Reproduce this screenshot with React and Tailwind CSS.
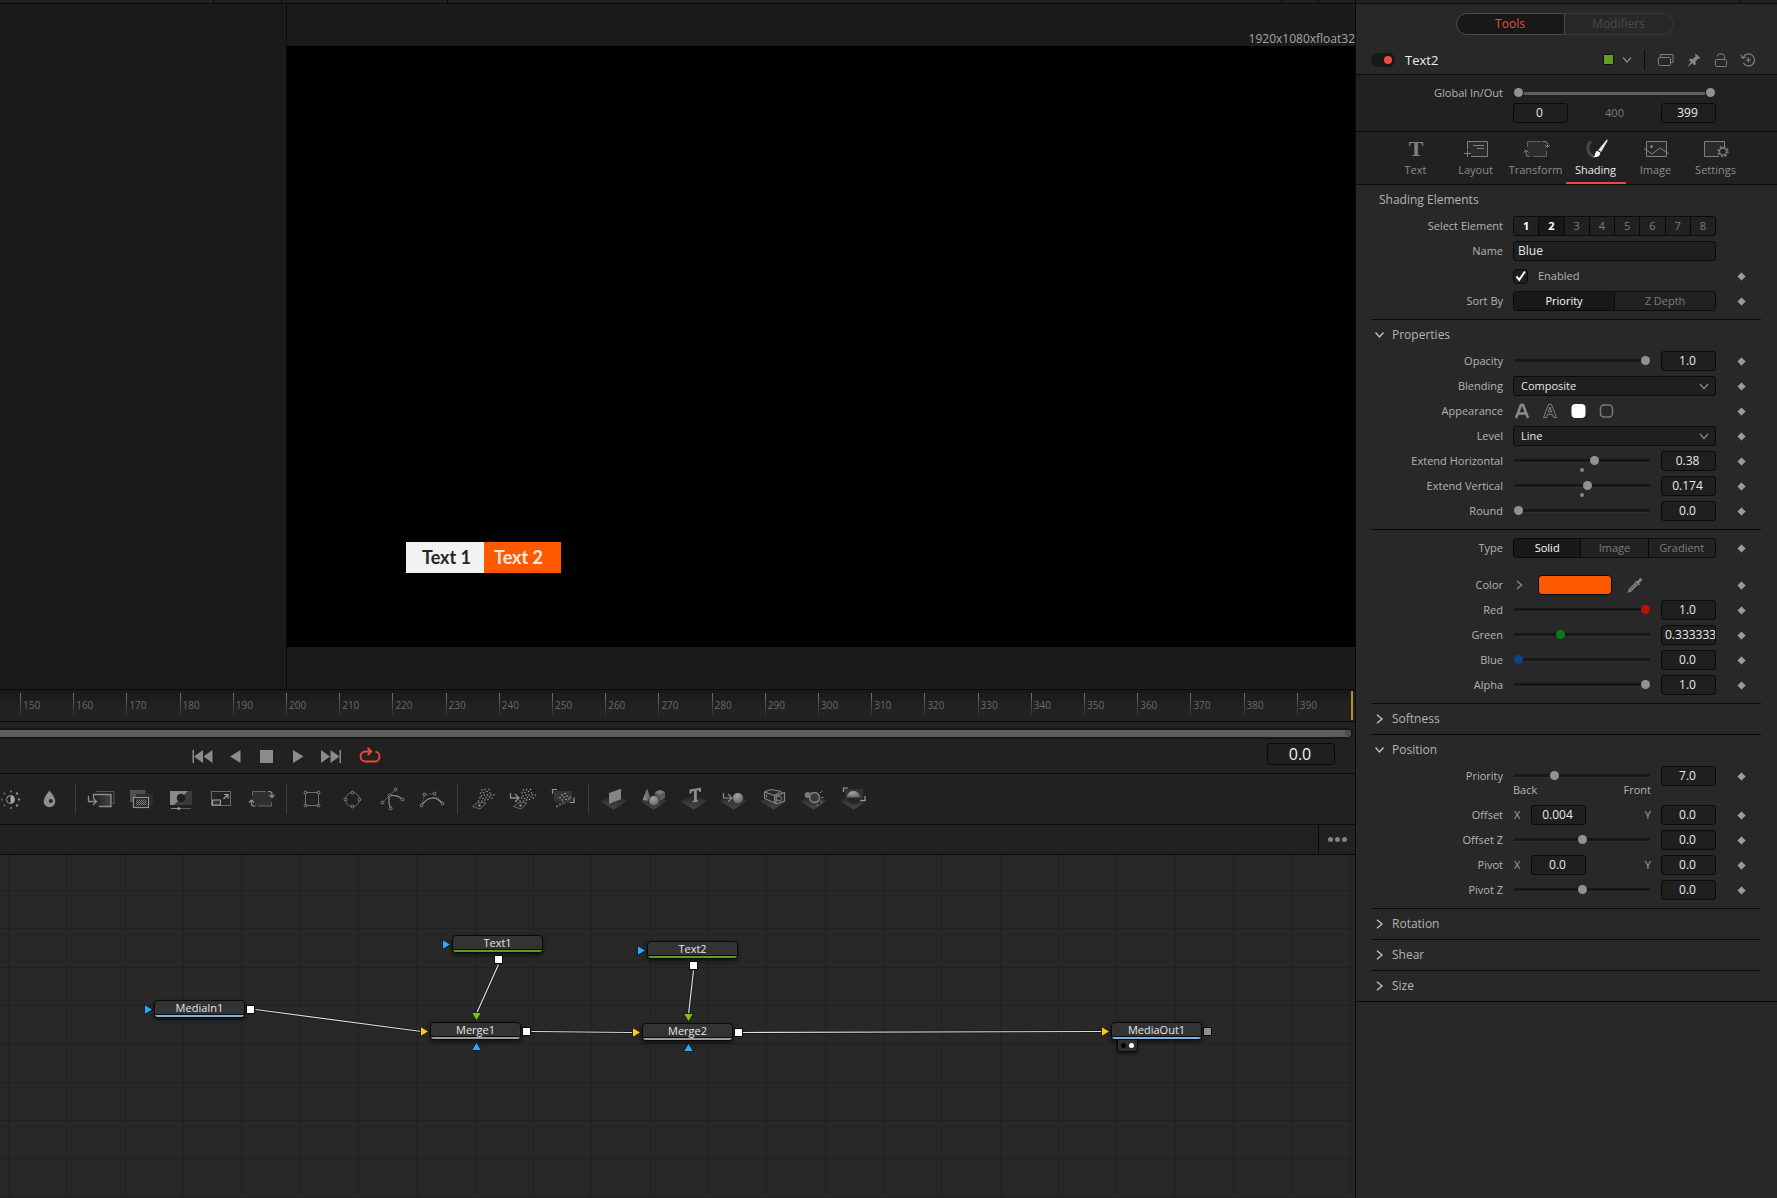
import React from "react";

/* ---------- shared pieces ---------- */

const thumb =
  "[&::-webkit-slider-thumb]:appearance-none [&::-webkit-slider-thumb]:w-[9px] [&::-webkit-slider-thumb]:h-[9px] [&::-webkit-slider-thumb]:rounded-full";
const thumbColors = {
  gray: "[&::-webkit-slider-thumb]:bg-[#919191]",
  red: "[&::-webkit-slider-thumb]:bg-[#b8120a]",
  green: "[&::-webkit-slider-thumb]:bg-[#0b7a1e]",
  blue: "[&::-webkit-slider-thumb]:bg-[#0d428c]",
};
const track =
  "[&::-webkit-slider-runnable-track]:h-[3px] [&::-webkit-slider-runnable-track]:rounded-full [&::-webkit-slider-runnable-track]:bg-[#171717] [&::-webkit-slider-runnable-track]:shadow-[0_1px_0_#303030] [&::-webkit-slider-thumb]:-mt-[3px]";

function Slider({ label, value, color = "gray", marker }) {
  return (
    <div className="relative flex h-5 w-[136px] items-center pb-px">
      <input
        type="range"
        aria-label={label}
        min="0"
        max="1"
        step="any"
        defaultValue={value}
        className={`h-[9px] w-full appearance-none bg-transparent ${thumb} ${thumbColors[color]} ${track}`}
      />
      {marker && (
        <span className="absolute left-1/2 top-[17px] h-1 w-1 -translate-x-1/2 rounded-full bg-[#858585]" />
      )}
    </div>
  );
}

function NumberBox({ label, value, start }) {
  return (
    <input
      type="text"
      aria-label={label}
      defaultValue={value}
      className={`h-5 w-[55px] shrink-0 rounded-[3px] border border-[#0a0a0a] bg-[#1f1f1f] pb-[2px] text-[12px] leading-4 text-[#e8e8e8] ${
        start ? "pl-[3px] text-left" : "pr-[2px] text-center"
      }`}
    />
  );
}

function Keyframe({ label }) {
  return (
    <button aria-label={`Keyframe ${label}`} className="ml-5 flex h-5 w-[11px] items-center justify-center">
      <svg width="11" height="11" viewBox="0 0 11 11">
        <path d="M5.5 .8 10.200 5.5 5.5 10.200 .8 5.5Z" fill="#9a9a9a" stroke="#161616" strokeWidth="1" />
      </svg>
    </button>
  );
}

function Row({ label, children, keyframe = true }) {
  return (
    <div className="flex h-5 items-center">
      <span className="mr-[10px] w-[132px] shrink-0 text-right text-[11px] leading-5 text-[#b4b4b4]">{label}</span>
      <div className="flex w-[203px] shrink-0 items-center justify-between">{children}</div>
      {keyframe && <Keyframe label={label || "Enabled"} />}
    </div>
  );
}

function SliderRow({ label, value, text, color, marker, start }) {
  return (
    <Row label={label}>
      <div className="pl-px">
        <Slider label={label} value={value} color={color} marker={marker} />
      </div>
      <NumberBox label={`${label} value`} value={text} start={start} />
    </Row>
  );
}

function Segments({ items, active }) {
  return (
    <div className="flex h-5 w-full divide-x divide-[#0a0a0a] overflow-hidden rounded-[3px] border border-[#0a0a0a]">
      {items.map((t) => (
        <button
          key={t}
          aria-pressed={t === active}
          className={`flex-1 text-[11px] leading-[18px] ${
            t === active ? "bg-[#181818] text-white" : "bg-[#212121] text-[#7c7c7c]"
          }`}
        >
          {t}
        </button>
      ))}
    </div>
  );
}

function Dropdown({ label, value }) {
  return (
    <div className="relative w-full">
      <select
        aria-label={label}
        defaultValue={value}
        className="block h-5 w-full appearance-none rounded-[3px] border border-[#0a0a0a] bg-[#1f1f1f] px-[7px] text-[11px] leading-[18px] text-[#e8e8e8]"
      >
        <option>{value}</option>
      </select>
      <svg className="pointer-events-none absolute right-[7px] top-[7px]" width="10" height="7" viewBox="0 0 10 7">
        <path d="m1 1 4 4.5L9 1" fill="none" stroke="#8a8a8a" strokeWidth="1.2" />
      </svg>
    </div>
  );
}

function SectionTitle({ title, open }) {
  return (
    <button aria-expanded={open} className="flex h-[30px] w-full items-center pl-1 text-[12px] text-[#b4b4b4]">
      <svg width="17" height="10" viewBox="0 0 17 10" className="shrink-0">
        {open ? (
          <path d="m.5 2.5 4 4.5 4-4.5" fill="none" stroke="#c0c0c0" strokeWidth="1.4" />
        ) : (
          <path d="M2 .8 7 5 2 9.200" fill="none" stroke="#c0c0c0" strokeWidth="1.4" />
        )}
      </svg>
      {title}
    </button>
  );
}

/* ---------- inspector ---------- */

const tabs = [
  {
    name: "Text",
    icon: (
      <text x="15" y="17" textAnchor="middle" fontFamily="Liberation Serif, serif" fontWeight="700" fontSize="22" fill="#808080">
        T
      </text>
    ),
  },
  {
    name: "Layout",
    icon: (
      <g fill="none" stroke="#808080">
        <path d="M6.500 10V2.500h20v15H10" fill="#2b2b2b" />
        <path d="M3 14.500h7M6.500 11v7M12 6.500h11M16 9.500h7" />
      </g>
    ),
  },
  {
    name: "Transform",
    icon: (
      <g fill="none" stroke="#808080">
        <path d="M6.500 2.500h19v15h-19z" fill="#2e2e2e" stroke="none" />
        <path d="M6.500 8V2.500H20M25.500 12v5.500H12" stroke="#606060" />
        <path d="M21.500 2.500H24q2.500 0 2.500 2.500v3M24 6l2.500 2.500L29 6M9 17.500H7.500Q5 17.500 5 15v-4M2.500 13.500 5 11l2.500 2.500" />
      </g>
    ),
  },
  {
    name: "Shading",
    active: true,
    icon: (
      <g>
        <path d="M10 2.500C4.500 7.500 6.500 15.500 13 17.500" fill="none" stroke="#484848" strokeWidth="3" />
        <path d="M25.800.500q1.200.4.700 1.600L20.200 13l-3-2Z" fill="#e4e4e4" />
        <path d="M16.500 11.800l3 2.200q-.6 4.500-7.500 4.200 2.300-1.200 2.200-3.600.2-2 2.300-2.800Z" fill="#fff" />
      </g>
    ),
  },
  {
    name: "Image",
    icon: (
      <g fill="none" stroke="#808080">
        <path d="M5.500 2.500h20v15h-20z" fill="#292929" />
        <circle cx="10.500" cy="7.500" r="1.300" fill="#909090" stroke="none" />
        <path d="M3 9.500 11 15l8-6 8.500 5.500" />
      </g>
    ),
  },
  {
    name: "Settings",
    icon: (
      <g fill="none" stroke="#808080">
        <path d="M18 17.500H3.500v-15h20V7" fill="#2b2b2b" />
        <circle cx="22" cy="12.500" r="5" fill="#212121" stroke="none" />
        <circle cx="22" cy="12.500" r="5" strokeWidth="1.500" strokeDasharray="1.900 2.027" />
        <circle cx="22" cy="12.500" r="3.500" strokeWidth="1.300" />
      </g>
    ),
  },
];

function Divider() {
  return <div className="h-px bg-[#0a0a0a]" />;
}

function InspectorHeader() {
  return (
    <header className="border-b border-[#0a0a0a] pt-[9px]">
      <div className="flex h-[22px] justify-center pr-1 text-[12px]">
        <button className="w-[109px] rounded-l-full border border-[#4a4a4a] bg-[#181818] text-[#e64b3d]">Tools</button>
        <button className="w-[109px] rounded-r-full border border-l-0 border-[#363636] text-[#4a4a4a]">Modifiers</button>
      </div>
      <div className="mt-[10px] flex h-[29px] items-center pl-[15px] pr-[21px]">
        <button aria-label="Enable tool" className="flex h-[14px] w-6 items-center justify-end rounded-full bg-[#181818] pr-[3px]">
          <span className="h-2 w-2 rounded-full bg-[#ee4b40]" />
        </button>
        <h1 className="ml-[10px] flex-1 text-[13px] leading-[18px] text-[#ececec]">Text2</h1>
        <button aria-label="Node color" className="flex items-center">
          <span className="h-[11px] w-[11px] rounded-[1px] border border-[#101010] bg-[#659e1f]" />
          <svg width="10" height="8" viewBox="0 0 10 8" className="ml-2">
            <path d="m1 1.500 4 4.500 4-4.500" fill="none" stroke="#8a8a8a" strokeWidth="1.200" />
          </svg>
        </button>
        <span className="mx-3 h-5 w-px bg-[#0a0a0a]" />
        <div className="flex items-center gap-3">
          <button aria-label="Versions">
            <svg width="17" height="14" viewBox="0 0 17 14" fill="none" stroke="#808080">
              <rect x="1.500" y="4.500" width="12" height="8" rx="1" />
              <path d="M3.500 4V1.500h12.500v8h-2" />
            </svg>
          </button>
          <button aria-label="Pin">
            <svg width="16" height="16" viewBox="0 0 16 16" fill="#858585">
              <path d="M9.500 1.500 14.500 6l-1.200.8-1-.2-2.800 3 .3 2.800-1.300.8L2.800 8l1-1.200 3 .2 3-2.700-.8-1.500ZM5.400 9.300l1.500 1.400L1 15.300Z" />
            </svg>
          </button>
          <button aria-label="Lock">
            <svg width="14" height="14" viewBox="0 0 14 14" fill="none" stroke="#808080">
              <path d="M3.500 3.500V3A2 2 0 0 1 5.500 1h2.500a2.500 2.500 0 0 1 2.500 2.500v3" />
              <rect x="1.500" y="6.500" width="11" height="7" rx="1" />
            </svg>
          </button>
          <button aria-label="Reset">
            <svg width="16" height="14" viewBox="0 0 16 14" fill="none" stroke="#808080" strokeWidth="1.200">
              <path d="M3 4.500A6 6 0 1 1 3.200 9.800M.600 2 2.600 5.200 6 4M8.300 4.500v5M5.800 7h5" />
            </svg>
          </button>
        </div>
      </div>
    </header>
  );
}

function Inspector() {
  return (
    <aside className="flex w-[422px] shrink-0 flex-col border-l border-[#0a0a0a] bg-[#282828]">
      <InspectorHeader />

      <section className="border-b border-[#0a0a0a] bg-[#212121] py-2 pl-[15px]">
        <Row label="Global In/Out" keyframe={false}>
          <div className="relative flex h-5 w-full items-center px-[11px]">
            <div className="h-[3px] w-full bg-[#5e5e5e]" />
            <input
              type="range"
              aria-label="Global in"
              min="0"
              max="399"
              defaultValue="0"
              className={`pointer-events-none absolute inset-x-px top-[5px] h-[9px] appearance-none bg-transparent ${thumb} ${thumbColors.gray}`}
            />
            <input
              type="range"
              aria-label="Global out"
              min="0"
              max="399"
              defaultValue="399"
              className={`pointer-events-none absolute inset-x-px top-[5px] h-[9px] appearance-none bg-transparent ${thumb} ${thumbColors.gray}`}
            />
          </div>
        </Row>
        <Row keyframe={false}>
          <NumberBox label="In" value="0" />
          <span className="text-[11px] text-[#7c7c7c]">400</span>
          <NumberBox label="Out" value="399" />
        </Row>
      </section>

      <nav className="flex justify-center border-b border-[#0a0a0a] bg-[#212121] pr-[2px]">
        {tabs.map((t) => (
          <button
            key={t.name}
            className={`flex h-[52px] w-[60px] flex-col items-center border-b-2 pt-[7px] text-[11px] leading-4 ${
              t.active ? "border-[#ee4b40] text-[#ececec]" : "border-transparent text-[#8c8c8c]"
            }`}
          >
            <svg width="30" height="20" viewBox="0 0 30 20" className="mb-[3px] overflow-visible">
              {t.icon}
            </svg>
            {t.name}
          </button>
        ))}
      </nav>

      <div className="pl-[15px] pr-4">
        <section>
          <h2 className="flex h-[30px] items-center pl-2 text-[12px] text-[#b4b4b4]">Shading Elements</h2>
          <div className="flex flex-col gap-[5px] pb-2 pt-px">
            <Row label="Select Element" keyframe={false}>
              <div className="flex h-5 w-full divide-x divide-[#0a0a0a] overflow-hidden rounded-[3px] border border-[#0a0a0a]">
                {[1, 2, 3, 4, 5, 6, 7, 8].map((n) => (
                  <button
                    key={n}
                    className={`flex-1 text-[11px] leading-[18px] ${
                      n === 2
                        ? "bg-[#181818] font-bold text-white"
                        : n === 1
                          ? "bg-[#212121] font-bold text-white"
                          : "bg-[#212121] text-[#7c7c7c]"
                    }`}
                  >
                    {n}
                  </button>
                ))}
              </div>
            </Row>
            <Row label="Name" keyframe={false}>
              <input
                type="text"
                aria-label="Name"
                defaultValue="Blue"
                className="h-5 w-full rounded-[3px] border border-[#0a0a0a] bg-[#1f1f1f] px-1 pb-[2px] text-[12px] leading-4 text-[#e8e8e8]"
              />
            </Row>
            <Row>
              <label className="flex items-center gap-[10px] text-[11px] text-[#b4b4b4]">
                <span className="relative h-[15px] w-[15px]">
                  <input
                    type="checkbox"
                    defaultChecked
                    className="block h-[15px] w-[15px] appearance-none rounded-sm border border-[#0a0a0a] bg-[#1f1f1f]"
                  />
                  <svg className="pointer-events-none absolute inset-0" width="15" height="15" viewBox="0 0 15 15">
                    <path d="m3.500 7.500 2.700 3.300L12 2.500" fill="none" stroke="#fff" strokeWidth="2" />
                  </svg>
                </span>
                Enabled
              </label>
            </Row>
            <Row label="Sort By">
              <Segments items={["Priority", "Z Depth"]} active="Priority" />
            </Row>
          </div>
        </section>

        <Divider />
        <section>
          <SectionTitle title="Properties" open />
          <div className="flex flex-col gap-[5px] pb-2 pt-px">
            <SliderRow label="Opacity" value={1} text="1.0" />
            <Row label="Blending">
              <Dropdown label="Blending" value="Composite" />
            </Row>
            <Row label="Appearance">
              <div className="flex gap-3 pl-px">
                <button aria-label="Text fill">
                  <svg width="16" height="16" viewBox="0 0 16 16">
                    <path d="m2 15 5-13h2l5 13M4.500 10.500h7" fill="none" stroke="#8a8a8a" strokeWidth="2.500" />
                  </svg>
                </button>
                <button aria-label="Text outline">
                  <svg width="16" height="16" viewBox="0 0 16 16" fill="none" stroke="#808080">
                    <path d="M1.500 14.500 6.500 1.500h3l5 13h-3l-1-3h-5l-1 3ZM6.300 9h3.400L8 4Z" />
                  </svg>
                </button>
                <button aria-label="Border fill">
                  <svg width="16" height="16" viewBox="0 0 16 16">
                    <rect x="1.500" y="1" width="14" height="14" rx="4" fill="#fff" />
                  </svg>
                </button>
                <button aria-label="Border outline">
                  <svg width="16" height="16" viewBox="0 0 16 16">
                    <rect x="2.500" y="2" width="12" height="12" rx="3.500" fill="none" stroke="#7a7a7a" strokeWidth="1.500" />
                  </svg>
                </button>
              </div>
            </Row>
            <Row label="Level">
              <Dropdown label="Level" value="Line" />
            </Row>
            <SliderRow label="Extend Horizontal" value={0.6} text="0.38" marker />
            <SliderRow label="Extend Vertical" value={0.545} text="0.174" marker />
            <SliderRow label="Round" value={0} text="0.0" />
          </div>
        </section>

        <Divider />
        <section className="flex flex-col gap-[5px] py-2">
          <Row label="Type">
            <Segments items={["Solid", "Image", "Gradient"]} active="Solid" />
          </Row>
          <div className="pt-3">
            <Row label="Color">
              <div className="flex items-center">
                <button aria-label="Expand color" className="mr-[15px] flex w-[10px] items-center justify-end">
                  <svg width="7" height="10" viewBox="0 0 7 10">
                    <path d="m1 1 4.500 4L1 9" fill="none" stroke="#8a8a8a" strokeWidth="1.300" />
                  </svg>
                </button>
                <button aria-label="Color swatch" className="h-5 w-[74px] rounded-sm border border-[#0a0a0a] bg-[#ff5900]" />
                <button aria-label="Pick color" className="ml-[15px]">
                  <svg width="16" height="16" viewBox="0 0 16 16">
                    <path d="m8.200 6.200 1.800 1.800-6 6-2.600 1 .8-2.800Z" fill="#5c5c5c" stroke="#8a8a8a" strokeWidth="1.100" />
                    <path d="m8 4.500 1-1 1.200 1L12.700 1.600q1.300-.8 2.200.2.700 1-.3 2L12 6.200l1 1.200-1 1Z" fill="#858585" />
                  </svg>
                </button>
              </div>
            </Row>
          </div>
          <SliderRow label="Red" value={1} text="1.0" color="red" />
          <SliderRow label="Green" value={0.333} text="0.333333" color="green" start />
          <SliderRow label="Blue" value={0} text="0.0" color="blue" />
          <SliderRow label="Alpha" value={1} text="1.0" />
        </section>

        <Divider />
        <SectionTitle title="Softness" open={false} />
        <Divider />
        <section>
          <SectionTitle title="Position" open />
          <div className="flex flex-col gap-[5px] pb-2 pt-px">
            <div>
              <SliderRow label="Priority" value={0.285} text="7.0" />
              <div className="ml-[142px] flex h-[14px] w-[138px] justify-between text-[11px] leading-[8px] text-[#b4b4b4]">
                <span>Back</span>
                <span>Front</span>
              </div>
            </div>
            <Row label="Offset">
              <span className="w-[18px] pl-px text-[11px] text-[#a0a0a0]">X</span>
              <NumberBox label="Offset X" value="0.004" />
              <span className="w-[75px] pr-[10px] text-right text-[11px] text-[#a0a0a0]">Y</span>
              <NumberBox label="Offset Y" value="0.0" />
            </Row>
            <SliderRow label="Offset Z" value={0.5} text="0.0" />
            <Row label="Pivot">
              <span className="w-[18px] pl-px text-[11px] text-[#a0a0a0]">X</span>
              <NumberBox label="Pivot X" value="0.0" />
              <span className="w-[75px] pr-[10px] text-right text-[11px] text-[#a0a0a0]">Y</span>
              <NumberBox label="Pivot Y" value="0.0" />
            </Row>
            <SliderRow label="Pivot Z" value={0.5} text="0.0" />
          </div>
        </section>
        <Divider />
        <SectionTitle title="Rotation" open={false} />
        <Divider />
        <SectionTitle title="Shear" open={false} />
        <Divider />
        <SectionTitle title="Size" open={false} />
      </div>
      <Divider />
    </aside>
  );
}

/* ---------- viewers ---------- */

function Viewers() {
  return (
    <div className="flex">
      <div className="w-[287px] shrink-0 border-r border-[#0a0a0a] bg-[#1a1a1a]" />
      <div className="flex flex-1 flex-col bg-[#1b1b1b]">
        <div className="flex h-[42px] items-end justify-end text-[12px] leading-[14px] text-[#a6a6a6]">1920x1080xfloat32</div>
        <div className="relative aspect-video w-full bg-black">
          <div className="absolute bottom-[74px] left-[119px] flex h-[31px] font-['Lato'] text-[18px] font-bold leading-[31px]">
            <div className="w-[78px] bg-[#f2f2f2] pl-4 text-[#252525]">Text 1</div>
            <div className="w-[77px] bg-[#ff5900] pl-[10px] text-[#ffe9e4]">Text 2</div>
          </div>
        </div>
        <div className="h-[42px]" />
      </div>
    </div>
  );
}

function Timeline() {
  const frames = Array.from({ length: 25 }, (_, i) => 150 + i * 10);
  return (
    <div>
      <div className="relative h-[33px] border-y border-[#0a0a0a] bg-gradient-to-b from-[#191919] to-[#222222] to-60% pl-5 pr-[5px]">
        <div className="grid grid-cols-[repeat(25,minmax(0,1fr))] pt-[3px]">
          {frames.map((f) => (
            <div key={f} className="flex">
              <span className="h-6 w-px bg-gradient-to-b from-[#777777] to-[#262626]" />
              <span className="pl-[2px] text-[10px] leading-6 text-[#6a6a6a]">{f}</span>
            </div>
          ))}
        </div>
        <span className="absolute bottom-px right-[2px] top-px w-[2px] bg-[#b98b26]" />
      </div>
      <div className="bg-[#212121] pr-[2px] pt-[6px]">
        <div className="flex h-[11px] items-center rounded-r-full border-y-2 border-r-2 border-[#161616] bg-[#5c5c5c] shadow-[0_1px_0_#303030]">
          <span className="ml-auto h-[6px] w-[6px] rounded-full bg-[#4a4a4a]" />
        </div>
      </div>
    </div>
  );
}

const transport = [
  { name: "Go to start", w: 22, gap: "ml-0", icon: <path d="M.500 1H2v13H.500zM11 1v13L2 7.500zM20.500 1v13l-9-6.500z" /> },
  { name: "Play reverse", w: 12, gap: "ml-4", icon: <path d="M10.500 1v13L0 7.500z" /> },
  { name: "Stop", w: 14, gap: "ml-[18px]", icon: <path d="M0 1h13v13H0z" /> },
  { name: "Play", w: 12, gap: "ml-[18px]", icon: <path d="M1 1v13l10.500-6.500z" /> },
  { name: "Go to end", w: 22, gap: "ml-4", icon: <path d="M19.500 1H21v13h-1.500zM1 1v13l9-6.500zM10.500 1v13l9-6.500z" /> },
];

function Transport() {
  return (
    <div className="flex h-[35px] items-center border-b border-[#0a0a0a] bg-[#212121] pl-48 pr-5">
      <div className="flex items-center pt-px">
        {transport.map((b) => (
          <button key={b.name} aria-label={b.name} className={b.gap}>
            <svg width={b.w} height="15" viewBox={`0 0 ${b.w} 15`} fill="#8b8b8b">
              {b.icon}
            </svg>
          </button>
        ))}
        <button aria-label="Loop" className="ml-4">
          <svg width="23" height="18" viewBox="0 0 23 18" fill="none" stroke="#ee4b3b" strokeWidth="1.800">
            <path d="M12 4.500H7.500a5 5 0 0 0 0 10h9a5 5 0 0 0 1-9.900M9.500 .8l3.800 3.700L9.500 8.200" />
          </svg>
        </button>
      </div>
      <input
        type="text"
        aria-label="Current time"
        defaultValue="0.0"
        className="mb-[3px] ml-auto h-[22px] w-[68px] rounded-[3px] border border-[#0a0a0a] bg-[#1f1f1f] pr-[2px] text-center text-[16px] leading-5 text-[#f0f0f0]"
      />
    </div>
  );
}

/* ---------- toolbar ---------- */

const Platform = () => <path d="M6.300 17.300 19.700 11l13.600 5.700-13.600 9Z" fill="url(#plat)" />;

const dots = [
  [19, 6], [22, 5.500], [26, 5.500], [17.500, 9], [20.500, 8.500], [24, 7.500], [27, 9], [18.500, 12], [21.500, 11], [24.500, 11],
  [28, 11], [31, 11], [17, 14], [20, 14.500], [23, 13.500], [26.500, 13], [29, 14], [19, 17], [22, 16], [25, 15.500], [15.500, 17],
];
const Particles = ({ dx = 0 }) => (
  <g fill="#a0a0a0">
    {dots.map(([x, y]) => (
      <circle key={`${x}-${y}`} cx={x + dx} cy={y} r="0.750" />
    ))}
  </g>
);
const Emitter = ({ dx = 0 }) => (
  <g transform={`translate(${dx} 0)`} fill="none" stroke="#6a6a6a">
    <path d="M9.500 22.500 15 18.500l8 .5-6 6Z" />
    <circle cx="16.500" cy="21.500" r="1.200" fill="#909090" stroke="none" />
  </g>
);
const Node = ({ x, y }) => <circle cx={x} cy={y} r="1.400" fill="#212121" stroke="#8a8a8a" />;

const toolGroups = [
  [
    {
      name: "Brightness Contrast",
      icon: (
        <g>
          <circle cx="20.500" cy="15.500" r="4" fill="none" stroke="#9a9a9a" />
          <path d="M20.500 11.500a4 4 0 0 1 0 8z" fill="#a8a8a8" />
          <g fill="#8a8a8a">
            <circle cx="21" cy="7.500" r="1" /><circle cx="27" cy="9.500" r="1.200" /><circle cx="29" cy="15.500" r="1.200" />
            <circle cx="27" cy="21.500" r="1.200" /><circle cx="21" cy="24" r="1" />
          </g>
          <g fill="#555555">
            <circle cx="14.500" cy="9.500" r="1.200" /><circle cx="12" cy="15.500" r="1.200" /><circle cx="14.500" cy="21.500" r="1.200" />
          </g>
        </g>
      ),
    },
    {
      name: "Blur",
      icon: (
        <g>
          <path d="M19.500 6.500q5.800 7 5.800 11a5.800 5.800 0 0 1-11.600 0q0-4 5.800-11Z" fill="#8f8f8f" />
          <circle cx="20.800" cy="17" r="2" fill="#242424" />
        </g>
      ),
    },
  ],
  [
    {
      name: "Merge",
      icon: (
        <g fill="none" stroke="#8c8c8c">
          <path d="M15.500 8V7.500h17.500v12h-2" stroke="#555555" />
          <rect x="13.500" y="10.500" width="16.500" height="12" fill="url(#fade)" stroke="none" />
          <path d="M12.500 14v-3.500h17.500v12H18" strokeWidth="1.300" />
          <path d="M7.500 12v5.500h8M12 14l3.500 3.500L12 21" strokeWidth="1.300" />
        </g>
      ),
    },
    {
      name: "Channel Booleans",
      icon: (
        <g>
          <path d="M15 10h17v11H15z" fill="#2d2d2d" />
          <path d="M9 6h15.500v4H15v8H9z" fill="#505050" />
          <rect x="12.500" y="13.500" width="15" height="10" fill="#242424" stroke="#909090" strokeWidth="1.200" />
          <rect x="15" y="15.500" width="10.500" height="6" fill="url(#check)" />
        </g>
      ),
    },
    {
      name: "Matte Control",
      icon: (
        <g>
          <path d="M9 7h22v14H9z" fill="#3a3a3a" />
          <path d="M9 7h18L13 21H9z" fill="#898989" />
          <circle cx="20" cy="14" r="4.300" fill="#1e1e1e" />
          <path d="M10 24.500h20" stroke="#5a5a5a" />
          <path d="M10 24.500h7" stroke="#8a8a8a" />
          <circle cx="17.800" cy="24.500" r="1.500" fill="#a0a0a0" />
        </g>
      ),
    },
    {
      name: "Resize",
      icon: (
        <g fill="none" stroke="#6c6c6c">
          <rect x="10.500" y="7.500" width="19" height="14" />
          <rect x="11.500" y="16" width="8" height="5" fill="#353535" stroke="#a0a0a0" />
          <path d="m22.500 15 4.500-4.500M23 10.500h4v4" stroke="#a0a0a0" strokeWidth="1.200" />
        </g>
      ),
    },
    {
      name: "Transform",
      icon: (
        <g fill="none" stroke="#909090">
          <path d="M11.500 7.500h19v14.500h-19z" fill="#2f2f2f" stroke="none" />
          <path d="M11.500 12V7.500H25M30.500 18v4H17" stroke="#666666" />
          <path d="M27 7.500h1.500q2.500 0 2.500 2.500v3M28.500 11 31 13.500 33.500 11M14.500 22H13q-2.500 0-2.500-2.500V16M8 18.500 10.500 16l2.500 2.500" strokeWidth="1.200" />
        </g>
      ),
    },
  ],
  [
    {
      name: "Rectangle",
      icon: (
        <g>
          <path d="M13.500 8.500h13v13h-13z" fill="none" stroke="#707070" />
          <Node x={13.5} y={8.5} /><Node x={26.5} y={8.5} /><Node x={26.5} y={21.5} /><Node x={13.5} y={21.5} />
        </g>
      ),
    },
    {
      name: "Ellipse",
      icon: (
        <g>
          <circle cx="20.500" cy="15.500" r="7" fill="none" stroke="#686868" />
          <Node x={20.5} y={8.5} /><Node x={27.5} y={15.5} /><Node x={20.5} y={22.5} /><Node x={13.5} y={15.5} />
        </g>
      ),
    },
    {
      name: "Polygon",
      icon: (
        <g>
          <path d="M23.700 5.500 10.500 18.500" stroke="#606060" />
          <path d="M17.500 11.500q8-1 13 4M17.500 11.500q-1.500 7 1 13" fill="none" stroke="#8a8a8a" strokeWidth="1.200" />
          <Node x={23.7} y={5.5} /><Node x={10.5} y={18.5} /><Node x={17.5} y={11.5} /><Node x={30.5} y={15.5} /><Node x={18.7} y={24.3} />
        </g>
      ),
    },
    {
      name: "BSpline",
      icon: (
        <g>
          <path d="m9.500 21.500 3-11 10-1 8 10" fill="none" stroke="#4c4c4c" />
          <path d="M9.500 21.500q10-14 21-2" fill="none" stroke="#9a9a9a" strokeWidth="1.200" />
          <Node x={9.5} y={21.5} /><Node x={12.5} y={10.5} /><Node x={22.5} y={9.5} /><Node x={30.5} y={19.5} />
        </g>
      ),
    },
  ],
  [
    { name: "pEmitter", icon: <g><Particles /><Emitter /></g> },
    {
      name: "pImage Emitter",
      icon: (
        <g>
          <Particles dx={1.5} />
          <Emitter dx={1} />
          <path d="M7.500 9v5h8M12 10l4 4-4 4" fill="none" stroke="#909090" strokeWidth="1.300" />
        </g>
      ),
    },
    {
      name: "pRender",
      icon: (
        <g>
          <path d="M11 7h18v10.500H11z" fill="#363636" />
          <g fill="#a0a0a0">
            {[[19, 11], [22, 9.5], [17, 13.5], [21, 13], [24, 12], [27, 13], [19, 16], [23, 15.5], [26, 15], [20, 18.5], [17, 20], [14, 22]].map(([x, y]) => (
              <circle key={`${x}-${y}`} cx={x} cy={y} r="0.800" />
            ))}
          </g>
          <path d="m13 23.500 13-6.500" stroke="#606060" strokeDasharray="2 1" />
          <path d="M9.500 10V5.500H14M31 13.500v5h-4.500" fill="none" stroke="#9a9a9a" strokeWidth="1.200" />
        </g>
      ),
    },
  ],
  [
    { name: "Image Plane 3D", icon: <g><Platform /><path d="m15 9 12-4.300v10.600l-12 4.400z" fill="#858585" /></g> },
    {
      name: "Shape 3D",
      icon: (
        <g>
          <Platform />
          <path d="m13 4.500 4.300 11.200q-4.300 2.300-8.500 0Z" fill="url(#metal)" />
          <path d="m26 6 5 2v6l-5 3-5-3V8z" fill="#5a5a5a" />
          <path d="m26 6 5 2-5 2.500L21 8z" fill="#7c7c7c" />
          <circle cx="20" cy="16.700" r="5.200" fill="url(#ball)" stroke="#222222" strokeWidth=".6" />
        </g>
      ),
    },
    {
      name: "Text 3D",
      icon: (
        <g>
          <Platform />
          <path d="m15.500 5.500 11.500-1.800v4l-1.500.3-.8-1.700-1.900.3v9.400l1.400.4v1.200l-5.700.9v-1.300l1.500-.8V7l-2 .4-.8 2.100-1.700.2z" fill="#8c8c8c" />
        </g>
      ),
    },
    {
      name: "Merge 3D",
      icon: (
        <g>
          <Platform />
          <path d="M9.500 9v5h8M14 10l4 4-4 4" fill="none" stroke="#8c8c8c" strokeWidth="1.200" />
          <circle cx="24" cy="14" r="5.200" fill="url(#ball)" />
        </g>
      ),
    },
    {
      name: "Camera 3D",
      icon: (
        <g>
          <Platform />
          <path d="m10.500 8 6-2.500 9 1.500 3 2v6l-8 4-10-4.500zM10.500 8l10 3.500v7.500M20.500 11.500l5-3" fill="#272727" stroke="#858585" strokeWidth="1.100" />
          <path d="m22 12 8.500-3.500V17L22 20z" fill="#2d2d2d" stroke="#858585" strokeWidth="1.100" />
          <circle cx="25" cy="14.500" r="2.500" fill="none" stroke="#858585" />
          <path d="M12.500 10.500v3" stroke="#858585" />
        </g>
      ),
    },
    {
      name: "Spot Light",
      icon: (
        <g>
          <Platform />
          <circle cx="13.700" cy="11" r="3" fill="#7a7a7a" />
          <path d="M15 8.500h5v9l-5-2.500z" fill="#606060" />
          <circle cx="20.500" cy="13.500" r="5" fill="#3a3a3a" stroke="#858585" strokeWidth="1.300" />
          <path d="m26 9 2.500-2M27 13.500h2.500M26 17l2.500 1.500M23 20l.8 2.200" stroke="#808080" />
        </g>
      ),
    },
    {
      name: "Renderer 3D",
      icon: (
        <g>
          <Platform />
          <path d="M11 5h18v12H11z" fill="#333333" />
          <circle cx="19.500" cy="13.500" r="6.700" fill="#262626" />
          <path d="M12.800 13.500a6.700 6.700 0 0 1 13.400 0z" fill="url(#ball)" />
          <path d="M9.500 8V4H14M31 12v4.500h-4.500" fill="none" stroke="#a0a0a0" strokeWidth="1.200" />
        </g>
      ),
    },
  ],
];

function Toolbar() {
  return (
    <div className="h-[51px] overflow-hidden border-b border-[#0a0a0a] bg-[#212121]">
      <svg width="0" height="0" className="absolute">
        <defs>
          <linearGradient id="plat" x1="0" y1="0" x2="0" y2="1">
            <stop offset="0" stopColor="#242424" />
            <stop offset="1" stopColor="#484848" />
          </linearGradient>
          <linearGradient id="metal">
            <stop offset="0" stopColor="#9c9c9c" />
            <stop offset="1" stopColor="#4c4c4c" />
          </linearGradient>
          <linearGradient id="fade">
            <stop offset="0" stopColor="#222222" />
            <stop offset="1" stopColor="#444444" />
          </linearGradient>
          <radialGradient id="ball" cx=".4" cy=".3" r=".8">
            <stop offset="0" stopColor="#a4a4a4" />
            <stop offset="1" stopColor="#5c5c5c" />
          </radialGradient>
          <pattern id="check" width="2" height="2" patternUnits="userSpaceOnUse">
            <path d="M0 0h1v1H0zM1 1h1v1H1z" fill="#808080" />
          </pattern>
        </defs>
      </svg>
      <div className="-ml-[10px] flex h-[50px] items-center">
        {toolGroups.map((group, i) => (
          <React.Fragment key={i}>
            {i > 0 && <span className="mx-[5px] h-[30px] w-px shrink-0 bg-[#3e3e3e]" />}
            {group.map((t) => (
              <button key={t.name} aria-label={t.name} className="h-[30px] w-10 shrink-0">
                <svg width="40" height="30" viewBox="0 0 40 30">
                  {t.icon}
                </svg>
              </button>
            ))}
          </React.Fragment>
        ))}
      </div>
    </div>
  );
}

/* ---------- node graph ---------- */

const nodes = [
  { name: "MediaIn1", x: 154, y: 145, color: "bg-[#7fb0dd]", left: "blue", right: "white" },
  { name: "Text1", x: 452, y: 80, color: "bg-[#5f9e1f]", left: "blue", bottom: "square" },
  { name: "Merge1", x: 430, y: 167, color: "bg-[#9a9a9a]", left: "yellow", right: "white", top: true, bottom: "tri" },
  { name: "Text2", x: 647, y: 86, color: "bg-[#5f9e1f]", left: "blue", bottom: "square" },
  { name: "Merge2", x: 642, y: 168, color: "bg-[#9a9a9a]", left: "yellow", right: "white", top: true, bottom: "tri" },
  { name: "MediaOut1", x: 1111, y: 167, color: "bg-[#7fb0dd]", left: "yellow", right: "gray", view: true },
];
const wires = [
  [255, 154, 421, 176],
  [498, 109, 476, 158],
  [531, 176, 633, 177],
  [693, 115, 688, 159],
  [739, 177, 1102, 176],
];
const portFill = { blue: "#27adf7", yellow: "#f7c81e" };

function GraphNode({ node }) {
  return (
    <div className="absolute h-[18px] w-[91px]" style={{ left: node.x, top: node.y }}>
      <div className="h-[18px] overflow-hidden rounded-[4px] border border-[#0a0a0a] bg-[#333333] shadow-[0_2px_4px_rgba(0,0,0,0.6)]">
        <div className="h-[14px] border-b border-[#0a0a0a] text-center text-[11px] leading-[14px] text-[#e4e4e4]">{node.name}</div>
        <div className={`h-[2px] ${node.color}`} />
      </div>
      <svg className="absolute -left-[10px] top-1" width="9" height="11" viewBox="0 0 9 11">
        <path d="M.500.500v10L8.700 5.500Z" fill={portFill[node.left]} stroke="#0a0a0a" strokeWidth=".8" />
      </svg>
      {node.right && (
        <span
          className={`absolute -right-[10px] top-[5px] h-[9px] w-[9px] border border-[#0a0a0a] ${
            node.right === "gray" ? "bg-[#909090]" : "bg-white"
          }`}
        />
      )}
      {node.top && (
        <svg className="absolute -top-[10px] left-[41px]" width="11" height="9" viewBox="0 0 11 9">
          <path d="M.500.500h10L5.500 8.700Z" fill="#83c20c" stroke="#0a0a0a" strokeWidth=".8" />
        </svg>
      )}
      {node.bottom === "tri" && (
        <svg className="absolute left-[41px] top-5" width="11" height="9" viewBox="0 0 11 9">
          <path d="M.500 8.500h10L5.500.300Z" fill="#27adf7" stroke="#0a0a0a" strokeWidth=".8" />
        </svg>
      )}
      {node.bottom === "square" && (
        <span className="absolute left-[42px] top-5 h-[9px] w-[9px] border border-[#0a0a0a] bg-white" />
      )}
      {node.view && (
        <div className="absolute left-[6px] top-[18px] flex h-[12px] w-[21px] items-center justify-center gap-[3px] rounded-b-[4px] border border-t-0 border-[#0a0a0a] bg-[#2f2f2f] shadow-[0_2px_3px_rgba(0,0,0,0.5)]">
          <span className="h-[5px] w-[5px] rounded-full bg-black" />
          <span className="h-[5px] w-[5px] rounded-full bg-white" />
        </div>
      )}
    </div>
  );
}

function NodeGraph() {
  const cols = Array.from({ length: 60 }, (_, i) => Math.round(8 + (i * 175) / 3));
  const rows = Array.from({ length: 40 }, (_, i) => Math.round(35 + (i * 115) / 3));
  return (
    <div className="flex flex-1 flex-col">
      <div className="flex h-[30px] justify-end border-b border-[#0a0a0a] bg-[#212121]">
        <button
          aria-label="Node editor options"
          className="flex w-[37px] items-center justify-center gap-[2px] border-l border-[#0a0a0a]"
        >
          <span className="h-[5px] w-[5px] rounded-full bg-[#828282]" />
          <span className="h-[5px] w-[5px] rounded-full bg-[#828282]" />
          <span className="h-[5px] w-[5px] rounded-full bg-[#828282]" />
        </button>
      </div>
      <div className="relative min-h-[300px] flex-1 overflow-hidden bg-[#282828]">
        <svg className="absolute inset-0 h-full w-full">
          <g fill="#212121">
            {cols.map((x) => (
              <rect key={`c${x}`} x={x} y="0" width="1" height="100%" />
            ))}
            {rows.map((y) => (
              <rect key={`r${y}`} x="0" y={y} width="100%" height="1" />
            ))}
          </g>
          <g stroke="#101010" strokeWidth="2.500" transform="translate(0.500 0.500)">
            {wires.map(([a, b, c, d]) => (
              <line key={`${a}-${b}`} x1={a} y1={b} x2={c} y2={d} />
            ))}
          </g>
          <g stroke="#e0e0e0" strokeWidth="1.200" transform="translate(0.500 0.500)">
            {wires.map(([a, b, c, d]) => (
              <line key={`${a}-${b}`} x1={a} y1={b} x2={c} y2={d} />
            ))}
          </g>
        </svg>
        {nodes.map((n) => (
          <GraphNode key={n.name} node={n} />
        ))}
      </div>
    </div>
  );
}

export default function App() {
  return (
    <div className="flex min-h-screen flex-col overflow-hidden bg-[#212121] font-['Open_Sans',sans-serif]">
      <div className="flex h-1 border-b border-[#0a0a0a] bg-[#212121]">
        <div className="w-[214px] border-r border-[#0a0a0a]" />
        <div className="w-[68px] border-r border-[#0a0a0a]" />
        <div className="w-[166px] border-r border-[#0a0a0a]" />
        <div className="flex-1 border-r border-[#0a0a0a]" />
        <div className="w-[37px] border-r border-[#0a0a0a]" />
        <div className="w-[37px] border-r border-[#0a0a0a]" />
        <div className="w-[384px] border-r border-[#0a0a0a]" />
        <div className="w-[37px]" />
      </div>
      <div className="flex flex-1">
        <main className="flex min-w-0 flex-1 flex-col">
          <Viewers />
          <Timeline />
          <Transport />
          <Toolbar />
          <NodeGraph />
        </main>
        <Inspector />
      </div>
    </div>
  );
}
